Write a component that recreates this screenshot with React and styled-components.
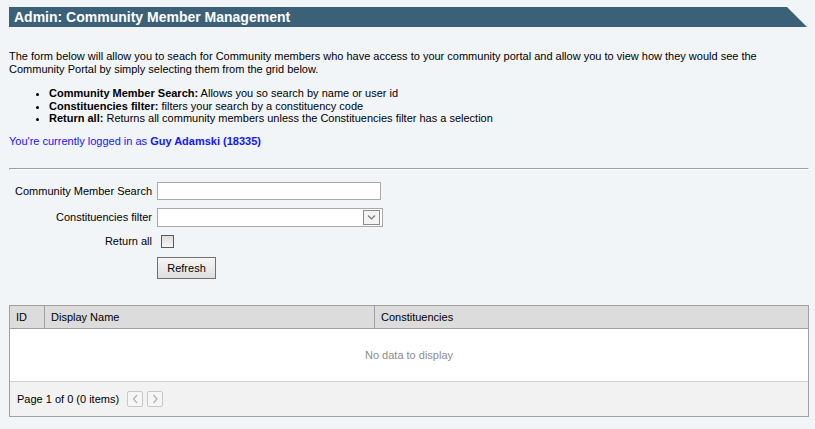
import React from "react";
import styled, { createGlobalStyle } from "styled-components";

const GlobalStyle = createGlobalStyle`
    body {
        margin: 0;
        background: #f2f5f8;
        font-family: "Liberation Sans", Arial, sans-serif;
        font-size: 11px;
        color: #000;
    }
`;

const Page = styled.div`
    padding: 7px 6px 12px 9px;
`;

/* 상단 타이틀 배너 */
const Banner = styled.div`
    height: 20px;
    margin-right: 2px;
    background: #3b6178;
    clip-path: polygon(0 0, calc(100% - 20px) 0, 100% 100%, 0 100%);
    color: #fff;
    font-size: 14px;
    font-weight: 700;
    line-height: 20px;
    padding-left: 5px;
`;

const Intro = styled.p`
    margin: 23px 0 0;
    line-height: 12.5px;
`;

const HelpList = styled.ul`
    margin: 12px 0 0;
    padding-left: 40px;
    line-height: 12.5px;
`;

const LoggedIn = styled.p`
    margin: 10px 0 0;
    color: #1414ff;
    line-height: 13px;
`;

const Divider = styled.hr`
    margin: 20px 0 0;
    height: 0;
    border-style: solid;
    border-width: 1px;
    border-color: #a0a0a0 #fff #fff #a0a0a0;
`;

/* 검색 폼 영역 */
const Form = styled.div`
    display: grid;
    grid-template-columns: 143px auto;
    column-gap: 5px;
    row-gap: 8px;
    align-items: center;
    justify-items: start;
    margin-top: 12px;
`;

const Label = styled.label`
    justify-self: end;
    white-space: nowrap;
`;

const TextBox = styled.input`
    box-sizing: border-box;
    width: 224px;
    height: 18px;
    margin: 0;
    border: 1px solid #a9a9a9;
    background: #fff;
    outline: none;
`;

const Combo = styled.div`
    box-sizing: border-box;
    width: 226px;
    height: 19px;
    display: flex;
    align-items: center;
    justify-content: flex-end;
    padding-right: 2px;
    border: 1px solid #a9a9a9;
    background: #fff;
`;

const ComboButton = styled.span`
    box-sizing: border-box;
    width: 17px;
    height: 15px;
    display: flex;
    align-items: center;
    justify-content: center;
    border: 1px solid #8c8c8c;
    background: #f4f4f4;
`;

const CheckBox = styled.span`
    box-sizing: border-box;
    width: 13px;
    height: 13px;
    margin: 0 0 0 4px;
    border: 1px solid #5a5a5a;
    background: linear-gradient(#dcdcdc, #f6f6f6);
`;

const Button = styled.button`
    width: 59px;
    height: 22px;
    margin-top: 1px;
    padding: 0;
    border: 1px solid #707070;
    border-radius: 0;
    background: linear-gradient(#f6f6f6, #dedede);
    font-family: inherit;
    font-size: 11px;
    color: #000;
`;

/* 그리드 */
const Grid = styled.div`
    margin-top: 26px;
    border: 1px solid #a0a0a0;
    background: #fff;
`;

const GridHeader = styled.div`
    display: grid;
    grid-template-columns: 34px 330px 1fr;
    height: 22px;
    background: #dcdcdc;
    border-bottom: 1px solid #a0a0a0;
`;

const HeaderCell = styled.div`
    display: flex;
    align-items: center;
    padding-left: 6px;
    border-left: ${(p) => (p.first ? "none" : "1px solid #a0a0a0")};
`;

const EmptyRow = styled.div`
    height: 52px;
    display: flex;
    align-items: center;
    justify-content: center;
    color: #8c8c8c;
`;

const Pager = styled.div`
    height: 34px;
    display: flex;
    align-items: center;
    gap: 4px;
    padding-left: 7px;
    background: #f2f2f2;
    border-top: 1px solid #d0d0d0;
`;

const PagerText = styled.span`
    margin-right: 4px;
`;

const PagerButton = styled.span`
    box-sizing: border-box;
    width: 16px;
    height: 16px;
    display: flex;
    align-items: center;
    justify-content: center;
    border: 1px solid #c8c8c8;
    border-radius: 2px;
    background: #f6f6f6;
`;

const Chevron = ({ dir, color = "#b0b0b0" }) => {
    const d = {
        down: "M1 1.5 L4.5 5 L8 1.5",
        left: "M5 1 L1.5 5 L5 9",
        right: "M1.5 1 L5 5 L1.5 9",
    }[dir];
    const size = dir === "down" ? [9, 7] : [7, 10];
    return (
        <svg width={size[0]} height={size[1]} viewBox={`0 0 ${size[0]} ${size[1]}`}>
            <path d={d} fill="none" stroke={color} strokeWidth="1.2" />
        </svg>
    );
};

const App = () => {
    return (
        <Page>
            <GlobalStyle />
            <Banner>Admin: Community Member Management</Banner>
            <Intro>
                The form below will allow you to seach for Community members who have access to your community portal and allow you to view how they would see the Community Portal by simply selecting them from the grid below.
            </Intro>
            <HelpList>
                <li><b>Community Member Search:</b> Allows you so search by name or user id</li>
                <li><b>Constituencies filter:</b> filters your search by a constituency code</li>
                <li><b>Return all:</b> Returns all community members unless the Constituencies filter has a selection</li>
            </HelpList>
            <LoggedIn>
                You're currently logged in as <b>Guy Adamski (18335)</b>
            </LoggedIn>
            <Divider />
            <Form>
                <Label>Community Member Search</Label>
                <TextBox type="text" />
                <Label>Constituencies filter</Label>
                <Combo>
                    <ComboButton><Chevron dir="down" color="#777" /></ComboButton>
                </Combo>
                <Label>Return all</Label>
                <CheckBox />
                <span />
                <Button>Refresh</Button>
            </Form>
            <Grid>
                <GridHeader>
                    <HeaderCell first>ID</HeaderCell>
                    <HeaderCell>Display Name</HeaderCell>
                    <HeaderCell>Constituencies</HeaderCell>
                </GridHeader>
                <EmptyRow>No data to display</EmptyRow>
                <Pager>
                    <PagerText>Page 1 of 0 (0 items)</PagerText>
                    <PagerButton><Chevron dir="left" /></PagerButton>
                    <PagerButton><Chevron dir="right" /></PagerButton>
                </Pager>
            </Grid>
        </Page>
    );
};

export default App;
